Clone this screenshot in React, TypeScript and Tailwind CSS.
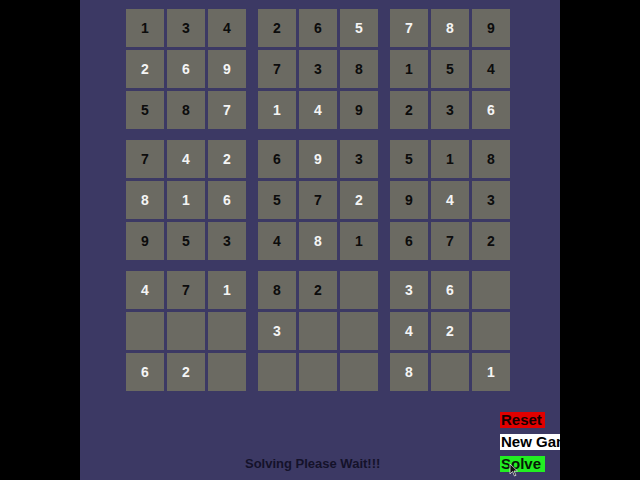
import React from "react";

// ".." = empty, otherwise digit + colour flag ("w" = white clue, "b" = black).
const board: string[] = [
  "1b 3b 4b 2b 6b 5w 7w 8w 9b",
  "2w 6w 9w 7b 3b 8b 1b 5b 4b",
  "5b 8b 7w 1w 4w 9b 2b 3b 6w",
  "7b 4w 2w 6b 9w 3b 5b 1b 8b",
  "8w 1w 6w 5b 7b 2w 9b 4w 3b",
  "9b 5b 3b 4b 8w 1b 6b 7b 2b",
  "4w 7b 1w 8b 2b .. 3w 6w ..",
  ".. .. .. 3w .. .. 4w 2w ..",
  "6w 2w .. .. .. .. 8w .. 1w",
];

const cells = board.map((row) => row.split(" "));

const Cell = ({ v }: { v: string }) => (
  <div className="w-[38px] h-[38px] bg-[#6b6a62] flex items-center justify-center">
    {v !== ".." && (
      <span
        className={
          "text-[14px] font-bold leading-none " +
          (v[1] === "w" ? "text-[#f4f4f4]" : "text-[#0c0c0c]")
        }
      >
        {v[0]}
      </span>
    )}
  </div>
);

const Block = ({ br, bc }: { br: number; bc: number }) => (
  <div className="grid grid-cols-3 gap-[3px]">
    {[0, 1, 2].flatMap((r) =>
      [0, 1, 2].map((c) => <Cell key={`${r}-${c}`} v={cells[br * 3 + r][bc * 3 + c]} />)
    )}
  </div>
);

const Cursor = () => (
  <svg
    className="absolute left-[429px] top-[463px]"
    width="10"
    height="14"
    viewBox="0 0 10 14"
  >
    <path d="M1 1 L1 11 L3.5 8.5 L5.5 13 L7 12.3 L5 8 L8.5 8 Z" fill="#111" stroke="#ddd" strokeWidth="0.8" />
  </svg>
);

export default function App() {
  return (
    <div
      className="w-[640px] h-[480px] bg-black flex justify-center"
      style={{ fontFamily: '"Liberation Sans", Arial, sans-serif' }}
    >
      <div className="relative w-[480px] h-[480px] bg-[#3c3964] overflow-hidden flex flex-col">
        {/* 9x9 board */}
        <div className="ml-[46px] mt-[9px] grid grid-cols-3 gap-x-[12px] gap-y-[11px] w-max">
          {[0, 1, 2].flatMap((br) => [0, 1, 2].map((bc) => <Block key={`${br}${bc}`} br={br} bc={bc} />))}
        </div>

        {/* status line and controls */}
        <div className="mt-[21px] flex items-end">
          <div className="ml-[165px] w-[255px] shrink-0 h-4 leading-4 text-[13px] font-bold text-[#14122a]">
            Solving Please Wait!!!
          </div>
          <div className="flex flex-col items-start gap-[6px] shrink-0">
            <button className="w-[45px] h-4 leading-4 pl-[1px] text-left text-[15px] font-bold bg-[#e00000] text-[#160000]">
              Reset
            </button>
            <button className="h-4 leading-4 pl-[1px] pr-4 text-left text-[15px] font-bold bg-white text-black whitespace-nowrap">
              New Game
            </button>
            <button className="w-[45px] h-4 leading-4 pl-[1px] text-left text-[15px] font-bold bg-[#22ee22] text-[#061a06]">
              Solve
            </button>
          </div>
        </div>

        <Cursor />
      </div>
    </div>
  );
}
